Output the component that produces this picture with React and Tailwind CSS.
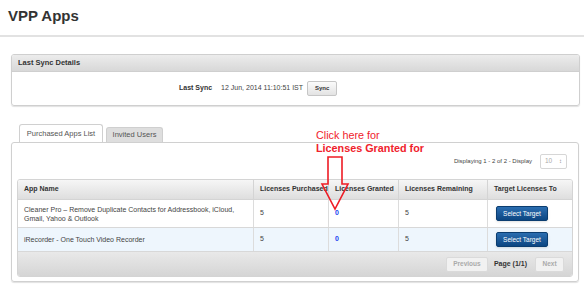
import React from "react";

const rows = [
  {
    name: "Cleaner Pro \u2013 Remove Duplicate Contacts for Addressbook, iCloud, Gmail, Yahoo & Outlook",
    purchased: 5,
    granted: 0,
    remaining: 5,
    bg: "bg-white",
    h: "h-[28px]",
  },
  {
    name: "iRecorder - One Touch Video Recorder",
    purchased: 5,
    granted: 0,
    remaining: 5,
    bg: "bg-[#eef6fd]",
    h: "h-[24px]",
  },
];

function SelectTargetButton() {
  return (
    <button className="h-[15px] w-[52px] rounded-[2px] border border-[#0b3d70] bg-gradient-to-b from-[#2a6db0] to-[#0c4682] text-[6.5px] text-white shadow-sm">
      Select Target
    </button>
  );
}

export default function App() {
  return (
    <div
      className="relative w-[584px] h-[287px] bg-white text-[#333] overflow-hidden"
      style={{ fontFamily: '"Liberation Sans", Arial, sans-serif' }}
    >
      {/* Page title */}
      <div className="h-[35px] px-[8px] pt-[6px]">
        <h1 className="text-[15px] font-bold leading-[20px] text-[#333]">VPP Apps</h1>
      </div>
      <div className="h-[2px] bg-[#e2e2e2]" />

      {/* Last sync panel */}
      <div className="ml-[11px] mr-[4px] mt-[17px] h-[52px] rounded-[3px] border border-[#cfcfcf] shadow-[0_1px_1px_rgba(0,0,0,0.12)] overflow-hidden">
        <div className="h-[17px] bg-gradient-to-b from-[#ececec] to-[#d8d8d8] border-b border-[#cfcfcf] px-[6px] flex items-center">
          <span className="text-[7.5px] font-bold text-[#333]">Last Sync Details</span>
        </div>
        <div className="flex items-center h-[33px] pl-[167px] text-[7px]">
          <span className="font-bold text-[#333]">Last Sync</span>
          <span className="ml-[9px] text-[#444]">12 Jun, 2014 11:10:51 IST</span>
          <button className="ml-[4px] h-[15px] w-[30px] rounded-[2px] border border-[#c6c6c6] bg-gradient-to-b from-[#fbfbfb] to-[#e3e3e3] text-[6px] font-bold text-[#333]">
            Sync
          </button>
        </div>
      </div>

      {/* Tabs */}
      <div className="ml-[19px] mt-[19px] flex items-end gap-[3px] h-[17px]">
        <div className="h-[18px] w-[84px] rounded-t-[3px] border border-b-0 border-[#d0d0d0] bg-white flex items-center justify-center text-[7.5px] text-[#555] relative z-10">
          Purchased Apps List
        </div>
        <div className="h-[15px] w-[57px] rounded-t-[3px] border border-b-0 border-[#cfcfcf] bg-[#dedede] flex items-center justify-center text-[7.5px] text-[#555]">
          Invited Users
        </div>
      </div>

      {/* Apps panel */}
      <div className="ml-[11px] mr-[5px] h-[140px] rounded-[3px] border border-[#d0d0d0] shadow-[0_1px_1px_rgba(0,0,0,0.12)] px-[5px]">
        <div className="flex items-center justify-end h-[36px] pr-[6px]">
          <span className="text-[6px] text-[#444]">Displaying 1 - 2 of 2 - Display</span>
          <div className="ml-[8px] h-[15px] w-[27px] rounded-[2px] border border-[#d6d6d6] flex items-center justify-between px-[4px] text-[6.5px] text-[#aaa]">
            <span>10</span>
            <span className="text-[6px] leading-none text-[#888]">{"\u2195"}</span>
          </div>
        </div>

        <div className="rounded-[3px] border border-[#d4d4d4] overflow-hidden">
          <div className="grid grid-cols-[235px_75px_70px_89px_1fr] h-[20px] bg-gradient-to-b from-[#f6f6f6] to-[#dedede] border-b border-[#d4d4d4] text-[7px] font-bold text-[#333]">
            <div className="flex items-center pl-[6px]">App Name</div>
            <div className="flex items-center pl-[6px] border-l border-[#d4d4d4]">Licenses Purchased</div>
            <div className="flex items-center pl-[6px] border-l border-[#d4d4d4]">Licenses Granted</div>
            <div className="flex items-center pl-[6px] border-l border-[#d4d4d4]">Licenses Remaining</div>
            <div className="flex items-center pl-[6px] border-l border-[#d4d4d4]">Target Licenses To</div>
          </div>
          {rows.map((r, i) => (
            <div
              key={i}
              className={`grid grid-cols-[235px_75px_70px_89px_1fr] ${r.h} ${r.bg} border-b border-[#d8d8d8] text-[7px] text-[#444]`}
            >
              <div className="flex items-center pl-[6px] pr-[16px] leading-[9px]">{r.name}</div>
              <div className="flex items-center pl-[6px] border-l border-[#dcdcdc]">{r.purchased}</div>
              <div className="flex items-center pl-[6px] border-l border-[#dcdcdc] font-bold text-[#1a3ff0]">{r.granted}</div>
              <div className="flex items-center pl-[6px] border-l border-[#dcdcdc]">{r.remaining}</div>
              <div className="flex items-center pl-[8px] border-l border-[#dcdcdc]">
                <SelectTargetButton />
              </div>
            </div>
          ))}
          <div className="h-[24px] bg-gradient-to-b from-[#e9e9e9] to-[#d5d5d5] flex items-center justify-end pr-[8px] text-[6.5px]">
            <button className="h-[15px] w-[42px] rounded-[2px] border border-[#dadada] bg-[#f1f1f1] font-bold text-[#aaa]">
              Previous
            </button>
            <span className="ml-[6px] font-bold text-[7px] text-[#333]">Page (1/1)</span>
            <button className="ml-[8px] h-[15px] w-[29px] rounded-[2px] border border-[#dadada] bg-[#f1f1f1] font-bold text-[#aaa]">
              Next
            </button>
          </div>
        </div>
      </div>

      {/* Annotation overlay */}
      <div className="absolute left-[316px] top-[129px] text-[10.8px] leading-[12.5px] text-[#f0222c]">
        <div>Click here for</div>
        <div className="font-bold">Licenses Granted for</div>
      </div>
      <svg className="absolute left-[318px] top-[154px]" width="34" height="60" viewBox="0 0 34 60">
        <path
          d="M10 3 H24 V30 H30 L17 55 L4 30 H10 Z"
          fill="none"
          stroke="#ee1c25"
          strokeWidth="1.6"
          strokeLinejoin="miter"
        />
      </svg>
    </div>
  );
}
